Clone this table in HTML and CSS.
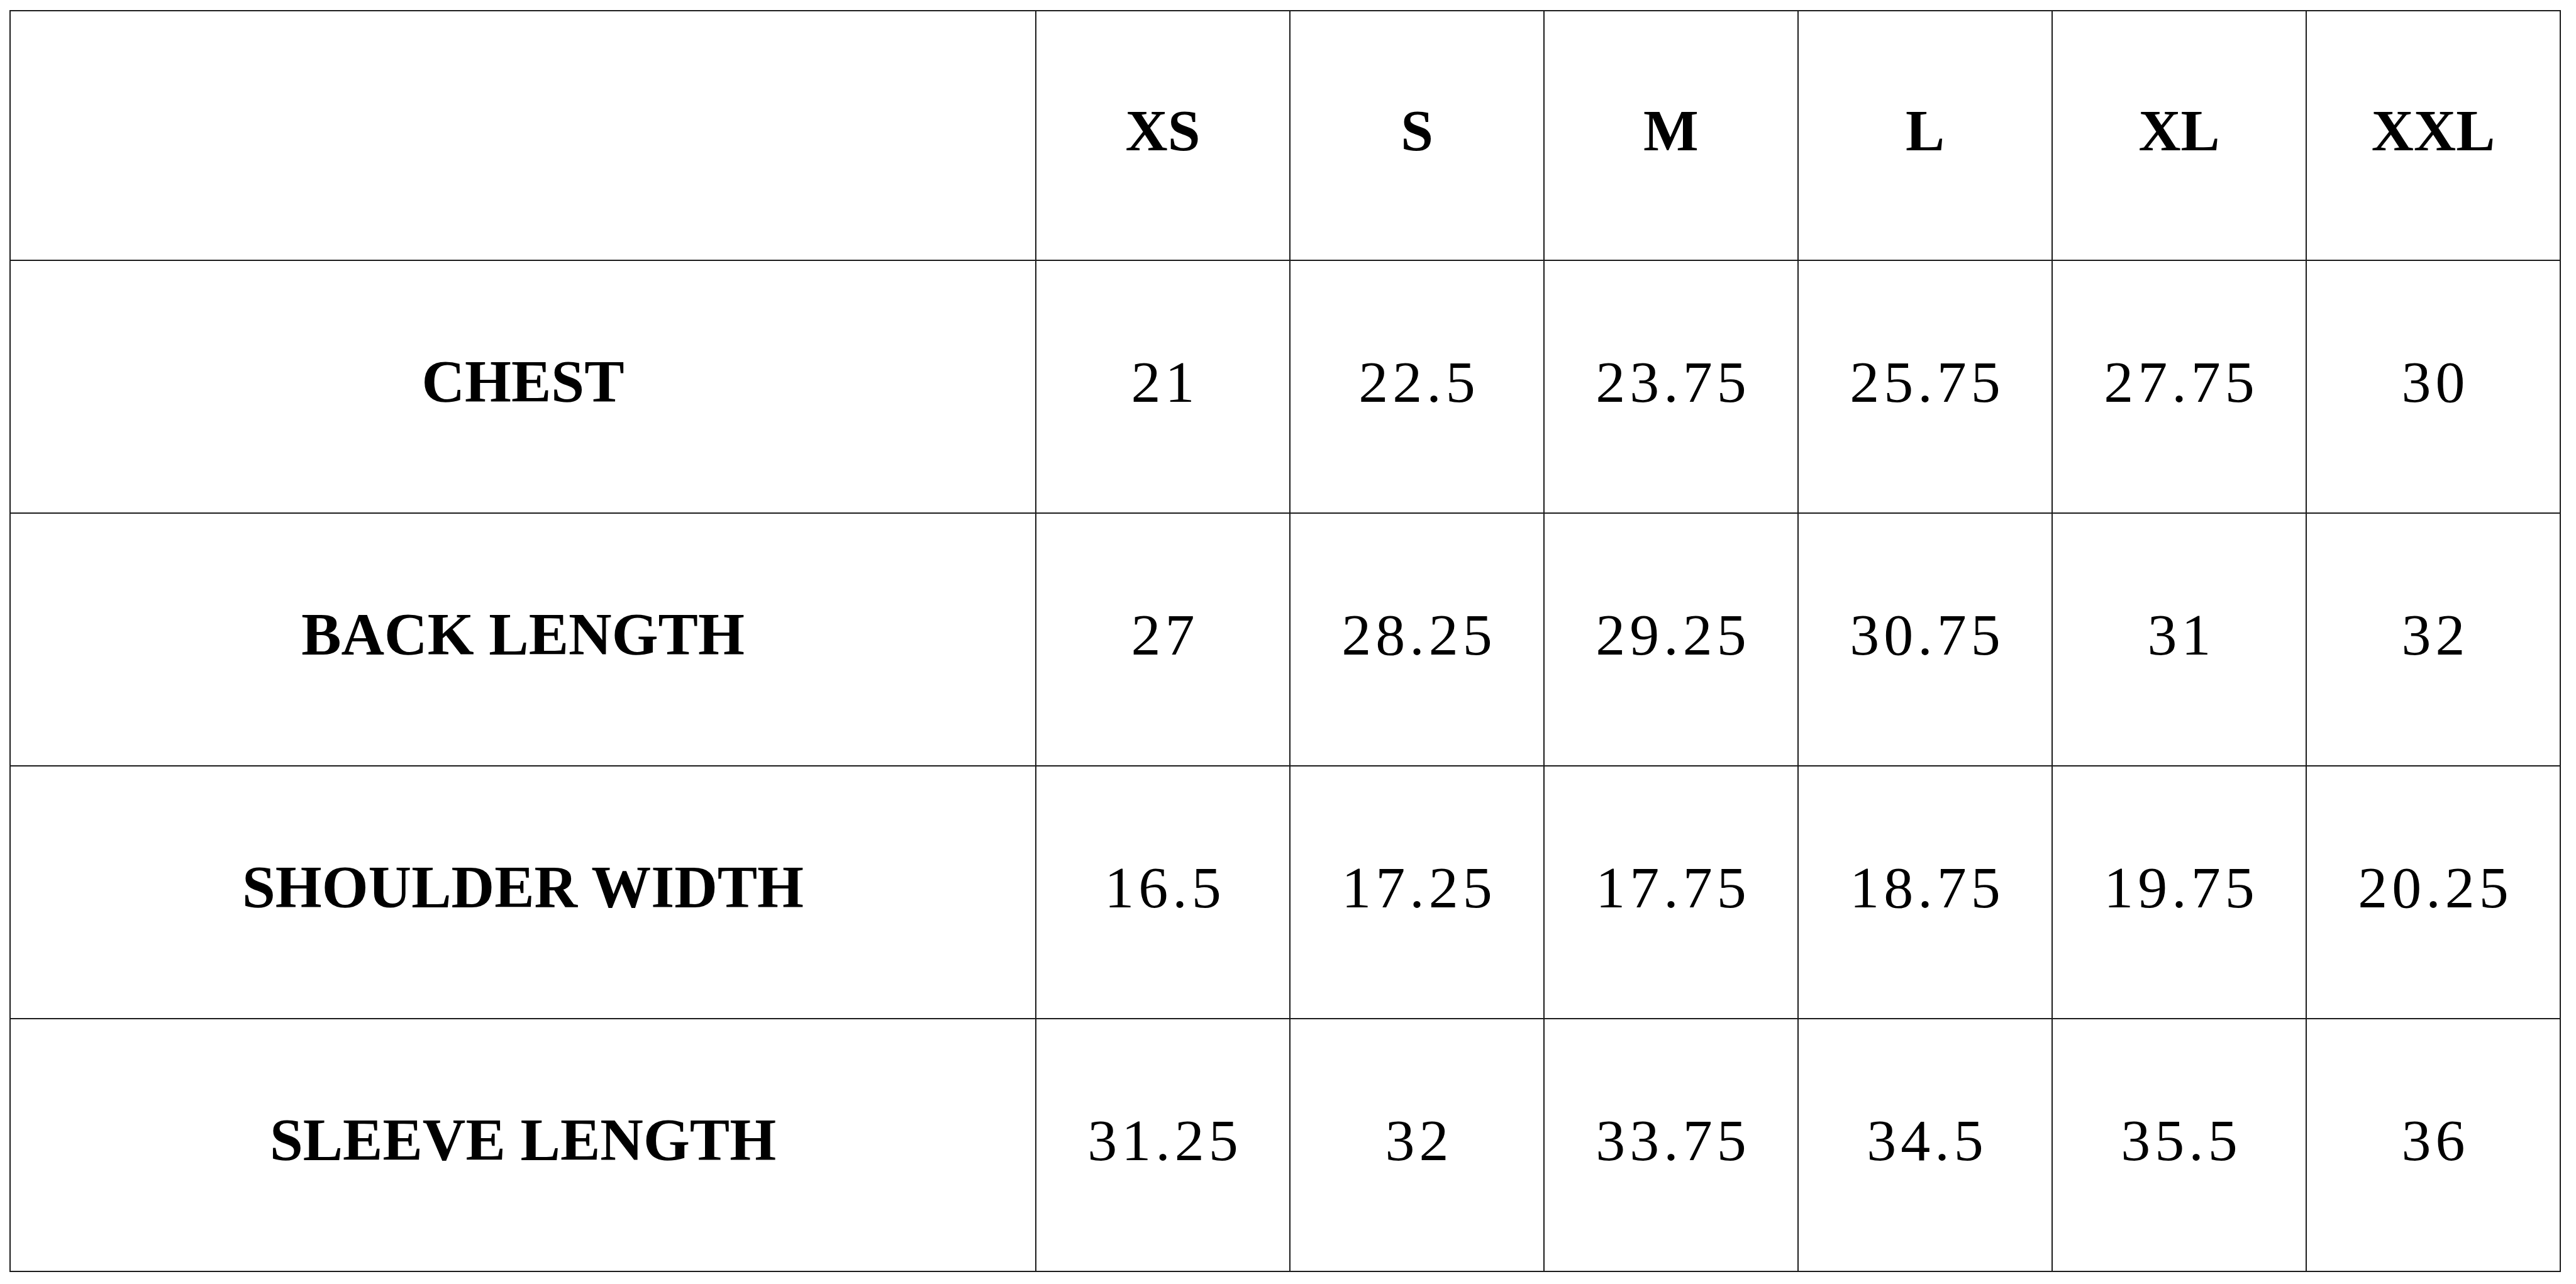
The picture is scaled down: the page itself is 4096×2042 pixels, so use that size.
FILE: index.html
```html
<!DOCTYPE html>
<html>
<head>
<meta charset="utf-8">
<link rel="stylesheet" href="styles.css">
</head>
<body>
<table class="size-chart">
  <colgroup>
    <col class="col-label">
    <col class="col-size"><col class="col-size"><col class="col-size">
    <col class="col-size"><col class="col-size"><col class="col-size">
  </colgroup>
  <thead>
    <tr class="head-row">
      <th class="corner"></th>
      <th>XS</th><th>S</th><th>M</th><th>L</th><th>XL</th><th>XXL</th>
    </tr>
  </thead>
  <tbody>
    <tr class="body-row">
      <th class="label">CHEST</th>
      <td>21</td><td>22.5</td><td>23.75</td><td>25.75</td><td>27.75</td><td>30</td>
    </tr>
    <tr class="body-row">
      <th class="label">BACK LENGTH</th>
      <td>27</td><td>28.25</td><td>29.25</td><td>30.75</td><td>31</td><td>32</td>
    </tr>
    <tr class="body-row">
      <th class="label">SHOULDER WIDTH</th>
      <td>16.5</td><td>17.25</td><td>17.75</td><td>18.75</td><td>19.75</td><td>20.25</td>
    </tr>
    <tr class="body-row">
      <th class="label">SLEEVE LENGTH</th>
      <td>31.25</td><td>32</td><td>33.75</td><td>34.5</td><td>35.5</td><td>36</td>
    </tr>
  </tbody>
</table>
</body>
</html>
```

FILE: styles.css
```css
html, body {
  margin: 0;
  padding: 0;
  background: #ffffff;
}

body {
  padding: 16px 0 0 15px;
  font-family: "Liberation Serif", "Times New Roman", serif;
  color: #000;
}

.size-chart {
  border-collapse: collapse;
  table-layout: fixed;
  width: 4057px;
}

.col-label {
  width: 1631px;
}

.col-size {
  width: 404px;
}

.size-chart th,
.size-chart td {
  border: 2px solid #1c1c1c;
  text-align: center;
  vertical-align: middle;
  padding: 0 0 16px 0;
}

.head-row {
  height: 397px;
}

.body-row {
  height: 402px;
}

.size-chart th {
  font-weight: bold;
  font-size: 93px;
}

.size-chart th.label {
  font-size: 95px;
}

.size-chart td {
  font-weight: normal;
  font-size: 94px;
  letter-spacing: 7px;
  padding-left: 7px;
}
```
